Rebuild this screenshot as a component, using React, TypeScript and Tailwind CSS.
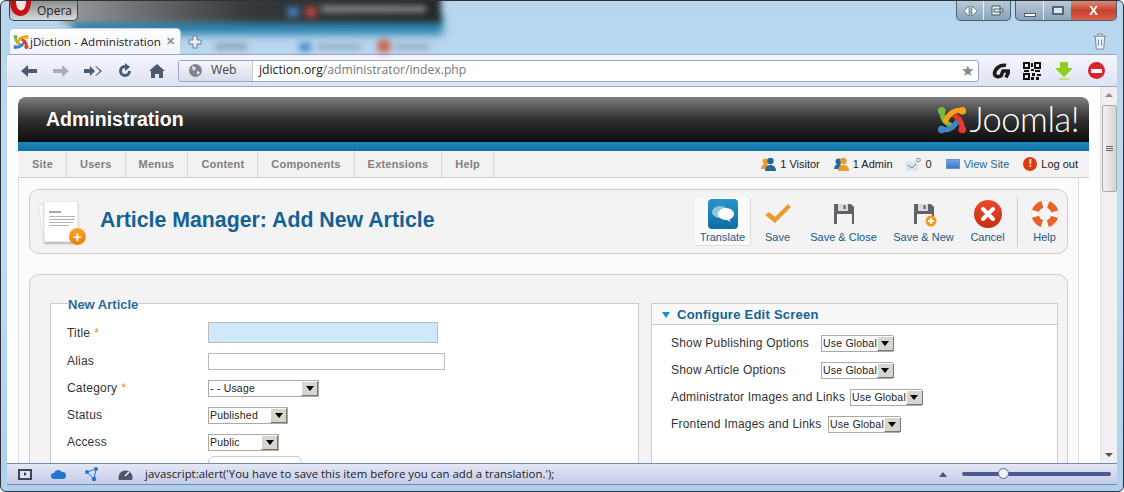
import React from 'react';

const page = "font-['Liberation_Sans',Arial,sans-serif]";
const chrome = "font-['Open_Sans','Noto_Sans',sans-serif]";

function JoomlaMark({ size }: { size: number }) {
  return (
    <svg width={size} height={size} viewBox="0 0 32 32" className="shrink-0">
      <path d="M6 7 C4 14 10 20 17 23" fill="none" stroke="#7cb83d" strokeWidth="5.500" strokeLinecap="round" />
      <path d="M6 26 C13 28 20 22 23 15" fill="none" stroke="#3c86c9" strokeWidth="5.500" strokeLinecap="round" />
      <path d="M26 26 C28 18 22 12 15 9" fill="none" stroke="#e8392f" strokeWidth="5.500" strokeLinecap="round" />
      <path d="M26 6 C19 4 12 10 9 17" fill="none" stroke="#f9a31a" strokeWidth="5.500" strokeLinecap="round" />
      <circle cx="5" cy="6" r="4" fill="#7cb83d" />
      <circle cx="27" cy="6" r="4" fill="#f9a31a" />
      <circle cx="5" cy="26" r="4" fill="#3c86c9" />
      <circle cx="27" cy="26" r="4" fill="#e8392f" />
    </svg>
  );
}

function NavIcon({ d, color = '#4c5a70' }: { d: string; color?: string }) {
  return (
    <svg width="18" height="16" viewBox="0 0 18 16" className="shrink-0">
      <path d={d} fill={color} />
    </svg>
  );
}

function FakeSelect({ label, width }: { label: string; width: number }) {
  return (
    <div
      className="flex h-[17px] items-stretch border border-[#aaaaaa] bg-white shrink-0"
      style={{ width }}
    >
      <span className="flex-1 pl-[1px] text-[10.500px] leading-[15px] text-[#222] tracking-[0.2px] whitespace-nowrap">
        {label}
      </span>
      <span className="flex w-[17px] shrink-0 items-center justify-center border border-t-white border-l-white border-r-[#777] border-b-[#777] bg-[#d8d5cf]">
        <span className="h-0 w-0 border-x-[4px] border-t-[5px] border-x-transparent border-t-black" />
      </span>
    </div>
  );
}

function FormRow({ label, required, children, top }: { label: string; required?: boolean; children: React.ReactNode; top: string }) {
  return (
    <div className={`flex items-center ${top}`}>
      <span className="w-[141px] shrink-0 text-[12px] tracking-[0.2px] text-[#333]">
        {label}
        {required && <span className="ml-[4px] text-[#f08a1d]">*</span>}
      </span>
      {children}
    </div>
  );
}

function ToolButton({ label, width, children, active }: { label: string; width: number; children: React.ReactNode; active?: boolean }) {
  return (
    <div
      className={`flex h-[48px] flex-col items-center shrink-0 ${active ? 'border-r border-b border-[#dddddd] bg-[#fafafa]' : ''}`}
      style={{ width }}
    >
      <div className="flex h-[32px] items-center justify-center">{children}</div>
      <span className="mt-[1px] text-[11px] leading-[13px] text-[#215a8b] whitespace-nowrap">{label}</span>
    </div>
  );
}

function Disk({ plus }: { plus?: boolean }) {
  return (
    <svg width="26" height="26" viewBox="0 0 26 26">
      <path d="M3 3h17l3 3v17H3z" fill="#5f6266" />
      <rect x="7" y="3" width="10" height="7" fill="#d9dadb" />
      <rect x="12.500" y="4" width="2" height="4" fill="#5f6266" />
      <rect x="6" y="13" width="15" height="10" fill="#f3f3f3" />
      {plus && (
        <>
          <circle cx="20" cy="20" r="5.500" fill="#f39a1f" />
          <path d="M20 17v6M17 20h6" stroke="#fff" strokeWidth="1.800" />
        </>
      )}
    </svg>
  );
}

function Person({ a, b }: { a: string; b: string }) {
  return (
    <svg width="15" height="15" viewBox="0 0 15 15" className="shrink-0">
      <circle cx="4.500" cy="4.500" r="3" fill={a} />
      <path d="M0 12c0-3 2-5 4.500-5S8 9 8 12z" fill={a} />
      <circle cx="9.500" cy="4" r="3.200" fill={b} />
      <path d="M4 14c0-4 2.500-6 5.500-6s5.500 2 5.500 6z" fill={b} />
    </svg>
  );
}

export default function App() {
  const menu = ['Site', 'Users', 'Menus', 'Content', 'Components', 'Extensions', 'Help'];
  const screenOptions = [
    { label: 'Show Publishing Options', cls: 'w-[150px]' },
    { label: 'Show Article Options', cls: 'w-[150px]' },
    { label: 'Administrator Images and Links', cls: 'w-[179px]' },
    { label: 'Frontend Images and Links', cls: 'w-[157px]' },
  ];

  return (
    <div className="relative flex h-[492px] w-[1124px] flex-col overflow-hidden rounded-[6px] bg-gradient-to-b from-[#b8d5ee] via-[#bfdcf5] to-[#afd0ee] border border-[#2c3338]">
      {/* blurred window behind the glass */}
      <div className="absolute left-[70px] top-[14px] h-[20px] w-[372px] bg-[#2d83ad] blur-[4px]" />
      <div className="absolute left-[60px] top-[-8px] h-[30px] w-[380px] bg-gradient-to-r from-[#9a9c9e] via-[#34383b] to-[#24282b] blur-[3px]" />
      <div className="absolute left-[286px] top-[6px] h-[10px] w-[12px] bg-[#3f7fb5] blur-[3px]" />
      <div className="absolute left-[304px] top-[6px] h-[10px] w-[12px] bg-[#b7473f] blur-[3px]" />
      <div className="absolute left-[320px] top-[5px] h-[6px] w-[105px] bg-[#8b9095] blur-[3px]" />
      <div className="absolute left-[214px] top-[43px] h-[5px] w-[32px] bg-[#7d97ac] blur-[3px]" />
      <div className="absolute left-[298px] top-[42px] h-[8px] w-[12px] bg-[#3f86cf] blur-[3px]" />
      <div className="absolute left-[316px] top-[43px] h-[5px] w-[44px] bg-[#8ba6bb] blur-[3px]" />
      <div className="absolute left-[376px] top-[38px] h-[14px] w-[14px] rounded-full bg-[#c9614f] blur-[3px]" />
      <div className="absolute left-[394px] top-[43px] h-[5px] w-[34px] bg-[#8ba6bb] blur-[3px]" />

      {/* title row */}
      <div className="relative flex h-[26px] shrink-0 items-start justify-between pl-[8px] pr-[6px]">
        <div className={`relative flex h-[20px] w-[69px] items-center overflow-hidden rounded-b-[5px] border border-t-0 border-[#3d4246] bg-gradient-to-b from-[#8c8f92] to-[#d9dadb] pl-[27px] text-[12px] text-[#222] ${chrome}`}>
          <svg width="22" height="16" viewBox="0 0 22 16" className="absolute left-0 top-0">
            <path d="M0 0h21c0 10-5 15-10.500 15S0 10 0 0z" fill="#c80f14" />
            <path d="M6 0h10c0 6-2 9.500-5 9.500S6 6 6 0z" fill="#f1e4e0" />
          </svg>
          Opera
        </div>
        <div className="flex gap-[4px]">
          <div className="flex h-[20px] w-[55px] items-center overflow-hidden rounded-b-[5px] border border-t-0 border-[#4a6070] bg-gradient-to-b from-[#b9c9d6] to-[#8aa3b8]">
            <span className="flex h-full flex-1 items-center justify-center border-r border-[#e6edf3]">
              <svg width="13" height="10" viewBox="0 0 13 10"><path d="M5 0v10L0 5zM8 0v10l5-5z" fill="#fff" stroke="#3c5160" strokeWidth="0.600" /></svg>
            </span>
            <span className="flex h-full flex-1 items-center justify-center">
              <svg width="13" height="11" viewBox="0 0 13 11"><path d="M1 1h8v9H1zM3 4h9v3H3z" fill="#e8eef2" stroke="#4a5c69" /></svg>
            </span>
          </div>
          <div className="flex h-[20px] w-[102px] items-center overflow-hidden rounded-b-[5px] border border-t-0 border-[#4a6070] bg-gradient-to-b from-[#b9c9d6] to-[#8aa3b8]">
            <span className="flex h-full w-[28px] items-end justify-center border-r border-[#e6edf3] pb-[3px]">
              <span className="h-[4px] w-[12px] border border-[#4a5c69] bg-white" />
            </span>
            <span className="flex h-full w-[27px] items-center justify-center">
              <span className="h-[9px] w-[12px] border-2 border-[#54666f] bg-[#dfe8ee]" />
            </span>
            <span className={`flex h-full flex-1 items-center justify-center bg-gradient-to-b from-[#d9897a] via-[#c8402c] to-[#d9624f] text-[13px] font-bold text-white ${page}`}>
              X
            </span>
          </div>
        </div>
      </div>

      {/* tab row */}
      <div className="relative flex h-[27px] shrink-0 items-end pl-[8px] pr-[15px]">
        <div className={`flex h-[26px] w-[172px] items-center rounded-t-[5px] border border-b-0 border-[#c7cde0] bg-gradient-to-b from-white to-[#f1f2fa] pl-[3px] text-[11.600px] text-[#222] ${chrome}`}>
          <JoomlaMark size={16} />
          <span className="ml-[1px] whitespace-nowrap">jDiction - Administration</span>
          <span className="ml-[5px] text-[11px] font-bold text-[#8a8f9c]">✕</span>
        </div>
        <svg width="14" height="14" viewBox="0 0 14 14" className="mb-[5px] ml-[7px]">
          <path d="M5 1h4v4h4v4H9v4H5V9H1V5h4z" fill="#e9eef3" stroke="#6d7f8f" />
        </svg>
        <svg width="16" height="17" viewBox="0 0 14 16" className="mb-[4px] ml-auto">
          <path d="M1 3h12M5 3V1h4v2M2.500 3l1 12h7l1-12M5.500 6v6M8.500 6v6" fill="#e9f2fa" stroke="#7e8f9c" />
        </svg>
      </div>

      <div className="flex min-h-0 flex-1 flex-col px-[6px]">
        {/* browser toolbar */}
        <div className="flex h-[33px] shrink-0 items-center border-t border-b border-[#9ba4c4] bg-gradient-to-b from-[#f5f6fd] to-[#dfe2f2] pl-[13px] pr-[12px]">
          <NavIcon d="M8 2v4h9v4H8v4L1 8z" />
          <span className="ml-[14px]"><NavIcon d="M10 2v4H1v4h9v4l7-6z" color="#a7afbd" /></span>
          <span className="ml-[14px]"><NavIcon d="M6 3v3H0v4h6v3l5-5zM11 3l5 5-5 5 1 0 6-5-6-5z" /></span>
          <span className="ml-[14px]"><NavIcon d="M9 2a6 6 0 1 0 6 6h-3a3 3 0 1 1-3-3v3l5-4-5-4z" /></span>
          <span className="ml-[14px]"><NavIcon d="M9 1l8 7h-2v7h-4v-4H7v4H3V8H1z" /></span>
          <div className={`ml-[12px] flex h-[22px] w-[801px] shrink-0 items-stretch overflow-hidden rounded-[3px] border border-[#9aa3c0] bg-white text-[12.200px] ${chrome}`}>
            <div className="flex w-[74px] items-center gap-[9px] border-r border-[#c4c9dc] bg-gradient-to-b from-[#f4f5fb] to-[#d9dcec] pl-[10px] text-[#444]">
              <svg width="13" height="13" viewBox="0 0 13 13">
                <circle cx="6.500" cy="6.500" r="6.500" fill="#7d8490" />
                <path d="M3 2l3 1 1 2-3 2zM8 7l3 1-2 3-1-1z" fill="#e3e5ea" />
              </svg>
              Web
            </div>
            <div className="flex flex-1 items-center pl-[6px] text-[#222]">
              jdiction.org<span className="text-[#777]">/administrator/index.php</span>
            </div>
            <span className="flex w-[22px] items-center justify-center text-[15px] text-[#7d8696]">★</span>
          </div>
          <svg width="18" height="16" viewBox="0 0 18 16" className="ml-[13px] shrink-0">
            <path d="M14 2.500C8 1 3 6 2.500 10.500 2.500 14 7 14 9 13l2-5h6l-3 6.500" fill="none" stroke="#1d1d1d" strokeWidth="3.600" />
          </svg>
          <svg width="18" height="18" viewBox="0 0 18 18" className="ml-[13px] shrink-0" shapeRendering="crispEdges">
            <path d="M0 0h7v7H0zM2 2v3h3V2zM11 0h7v7h-7zM13 2v3h3V2zM0 11h7v7H0zM2 13v3h3v-3zM8 1h2v4H8zM8 7h3v2H8zM12 8h5v2h-5zM1 8h5v2H1zM9 11h3v3H9zM14 12h4v2h-4zM8 15h3v3H8zM13 15h3v3h-3z" fill="#111" fillRule="evenodd" />
          </svg>
          <svg width="18" height="18" viewBox="0 0 18 18" className="ml-[14px] shrink-0">
            <path d="M5 0h8v6h5l-9 9-9-9h5z" fill="#8fce1e" />
            <path d="M4 16h10v2H4z" fill="#c3e46f" />
          </svg>
          <span className="ml-[15px] flex h-[17px] w-[17px] shrink-0 items-center justify-center rounded-full bg-[#d8262c]">
            <span className="h-[4px] w-[11px] bg-white" />
          </span>
        </div>

        {/* page viewport */}
        <div className="flex min-h-0 flex-1 bg-white">
          <div className={`min-w-0 flex-1 overflow-hidden pl-[11px] pr-[11px] pt-[10px] ${page}`}>
            <div className="flex h-[45px] items-center justify-between rounded-t-[8px] bg-gradient-to-b from-[#808080] via-[#303030] to-[#0e0e0e] pl-[28px] pr-[10px]">
              <span className="text-[19.500px] font-bold text-white">Administration</span>
              <div className="flex items-center gap-[3px]">
                <JoomlaMark size={30} />
                <span className="font-['Lato',sans-serif] text-[34.500px] font-light leading-none tracking-[-0.5px] text-white">Joomla!</span>
              </div>
            </div>
            <div className="h-[9px] bg-gradient-to-b from-[#1b86c0] to-[#11719f]" />

            <div className="flex h-[27px] items-stretch justify-between border-b border-[#cccccc] bg-[#f2f2f2] pr-[11px]">
              <div className="flex">
                {menu.map((m, i) => (
                  <span
                    key={m}
                    className={`flex items-center border-r border-[#d9d9d9] pt-[1px] text-[11px] font-bold tracking-[0.2px] text-[#808080] ${i === 0 ? 'pl-[14px] pr-[13px]' : 'px-[13px]'}`}
                  >
                    {m}
                  </span>
                ))}
              </div>
              <div className="flex items-center text-[11px] text-[#222]">
                <Person a="#f09a26" b="#1e6a9e" />
                <span className="ml-[4px]">1 Visitor</span>
                <span className="ml-[14px]"><Person a="#1e6a9e" b="#f09a26" /></span>
                <span className="ml-[4px]">1 Admin</span>
                <svg width="15" height="13" viewBox="0 0 15 13" className="ml-[13px]">
                  <rect x="0" y="3" width="12" height="10" fill="#dde4ea" />
                  <path d="M2 7l4 3 4-4" fill="none" stroke="#6d8396" />
                  <circle cx="12.500" cy="2" r="1.800" fill="#fff" stroke="#6d8396" />
                </svg>
                <span className="ml-[5px]">0</span>
                <span className="ml-[14px] h-[10px] w-[14px] border border-[#6b93bd] bg-gradient-to-b from-[#6aa7e6] to-[#3b78c4]" />
                <span className="ml-[4px] text-[#28699c]">View Site</span>
                <span className="ml-[14px] flex h-[14px] w-[14px] items-center justify-center rounded-full bg-[#dd3a12] text-[10px] font-bold leading-none text-white">!</span>
                <span className="ml-[4px]">Log out</span>
              </div>
            </div>

            {/* page body */}
            <div className="mr-[10px] h-[400px] border-x border-[#dddddd] bg-[#fbfbfb] px-[10px] pt-[11px]">
              <div className="flex h-[65px] items-center rounded-[10px] border border-[#cccccc] bg-[#f3f3f3] pr-[1px]">
                <div className="relative ml-[12px] h-[44px] w-[38px] shrink-0">
                  <div className="absolute left-[-2px] top-[2px] h-[38px] w-[20px] -rotate-[8deg] border border-[#e2e2e2] bg-[#f8f8f8]" />
                  <div className="absolute left-[2px] top-[1px] h-[41px] w-[34px] border border-[#ececec] bg-white pl-[4px] pt-[9px] shadow-[0_2px_2px_#bbb]">
                    <div className="h-[2px] w-[12px] bg-[#aaa]" />
                    <div className="mt-[3px] h-[1px] w-[26px] bg-[#b5b5b5]" />
                    <div className="mt-[2px] h-[1px] w-[26px] bg-[#b5b5b5]" />
                    <div className="mt-[2px] h-[1px] w-[24px] bg-[#b5b5b5]" />
                    <div className="mt-[2px] h-[1px] w-[20px] bg-[#b5b5b5]" />
                  </div>
                  <span className="absolute bottom-[-1px] right-[-6px] flex h-[17px] w-[17px] items-center justify-center rounded-full bg-gradient-to-b from-[#fba626] to-[#ee7c06] text-[15px] font-bold leading-none text-white">+</span>
                </div>
                <span className="ml-[20px] mb-[2px] text-[21.300px] font-bold text-[#146295] whitespace-nowrap">Article Manager: Add New Article</span>
                <div className="ml-auto flex items-center">
                  <ToolButton label="Translate" width={56} active>
                    <div className="flex h-[30px] w-[30px] items-center justify-center rounded-[4px] bg-gradient-to-b from-[#2b93c9] to-[#0d6ea6]">
                      <svg width="24" height="18" viewBox="0 0 24 18">
                        <ellipse cx="9" cy="7" rx="8" ry="6" fill="#8fc6e2" />
                        <ellipse cx="15" cy="9" rx="8" ry="6" fill="#fff" />
                        <path d="M17 13l3 4-6-3z" fill="#fff" />
                      </svg>
                    </div>
                  </ToolButton>
                  <ToolButton label="Save" width={53}>
                    <svg width="28" height="24" viewBox="0 0 28 24">
                      <path d="M1 13l4-3 6 5L24 2l3 3-16 16z" fill="#f1982a" />
                    </svg>
                  </ToolButton>
                  <ToolButton label="Save & Close" width={79}>
                    <Disk />
                  </ToolButton>
                  <ToolButton label="Save & New" width={81}>
                    <Disk plus />
                  </ToolButton>
                  <ToolButton label="Cancel" width={47}>
                    <span className="flex h-[28px] w-[28px] items-center justify-center rounded-full bg-gradient-to-b from-[#ee4a2a] to-[#c42d10]">
                      <svg width="14" height="14" viewBox="0 0 14 14"><path d="M2 2l10 10M12 2L2 12" stroke="#fff" strokeWidth="4" strokeLinecap="round" /></svg>
                    </span>
                  </ToolButton>
                  <div className="ml-[6px] mr-[5px] h-[50px] w-px bg-[#cccccc]" />
                  <ToolButton label="Help" width={43}>
                    <svg width="28" height="28" viewBox="0 0 28 28">
                      <circle cx="14" cy="14" r="10" fill="none" stroke="#e8622a" strokeWidth="7" />
                      <circle cx="14" cy="14" r="10" fill="none" stroke="#f7f7f7" strokeWidth="7.500" strokeDasharray="6 9.708" strokeDashoffset="3" />
                    </svg>
                  </ToolButton>
                </div>
              </div>

              <div className="mt-[20px] flex h-[260px] items-start gap-[12px] rounded-t-[10px] border border-[#cccccc] bg-[#f3f3f3] px-[20px] pt-[20px]">
                <fieldset className="h-[200px] w-[589px] shrink-0 border border-[#cccccc] bg-white pl-[16px]">
                  <legend className="ml-[1px] pt-[2px] text-[13px] font-bold leading-[15px] text-[#2a6a98]">New Article</legend>
                  <FormRow label="Title" required top="mt-[10px]">
                    <div className="h-[21px] w-[230px] border border-[#bbbbbb] bg-[#cfe8fb]" />
                  </FormRow>
                  <FormRow label="Alias" top="mt-[9px]">
                    <div className="h-[17px] w-[237px] border border-[#bbbbbb] bg-white" />
                  </FormRow>
                  <FormRow label="Category" required top="mt-[9px]">
                    <FakeSelect label="- - Usage" width={111} />
                  </FormRow>
                  <FormRow label="Status" top="mt-[9px]">
                    <FakeSelect label="Published" width={80} />
                  </FormRow>
                  <FormRow label="Access" top="mt-[9px]">
                    <FakeSelect label="Public" width={71} />
                  </FormRow>
                  <div className="ml-[141px] mt-[5px] h-[20px] w-[94px] rounded-t-[6px] border border-[#cccccc] bg-white" />
                </fieldset>

                <div className="mt-[8px] h-[200px] w-[407px] shrink-0 border border-[#cccccc] bg-white">
                  <div className="flex h-[21px] items-center border-b border-[#cccccc] bg-[#f8f8f8] pl-[10px] pt-[1px]">
                    <span className="h-0 w-0 border-x-[4px] border-t-[6px] border-x-transparent border-t-[#1b8fc7]" />
                    <span className="ml-[7px] text-[13px] font-bold tracking-[0.25px] text-[#146295]">Configure Edit Screen</span>
                  </div>
                  <div className="flex flex-col gap-[9px] pl-[19px] pt-[9px]">
                    {screenOptions.map((o) => (
                      <div key={o.label} className="flex items-center">
                        <span className={`${o.cls} shrink-0 text-[12px] tracking-[0.2px] text-[#333] whitespace-nowrap`}>{o.label}</span>
                        <FakeSelect label="Use Global" width={72} />
                      </div>
                    ))}
                  </div>
                </div>
              </div>
            </div>
          </div>

          {/* scrollbar */}
          <div className="flex w-[17px] shrink-0 flex-col items-center border-l border-[#e3e3e3] bg-[#f0f0f0]">
            <span className="mt-[6px] h-0 w-0 border-x-[4px] border-b-[4px] border-x-transparent border-b-[#8d8d8d]" />
            <div className="mt-[8px] flex h-[87px] w-[15px] items-center justify-center rounded-[2px] border border-[#a8a8a8] bg-gradient-to-r from-[#f2f2f2] to-[#d4d4d4]">
              <div className="flex flex-col gap-[1px]">
                <span className="h-px w-[7px] bg-[#666]" />
                <span className="h-px w-[7px] bg-[#666]" />
                <span className="h-px w-[7px] bg-[#666]" />
              </div>
            </div>
            <span className="mt-auto mb-[6px] h-0 w-0 border-x-[4px] border-t-[4px] border-x-transparent border-t-[#555]" />
          </div>
        </div>

        {/* status bar */}
        <div className={`flex h-[22px] shrink-0 items-center border-t border-b border-[#7688ad] bg-gradient-to-b from-[#e3e7f6] to-[#c5cce8] pl-[11px] pr-[6px] text-[11.400px] text-[#222] ${chrome}`}>
          <span className="flex h-[11px] w-[14px] items-center justify-center border-2 border-[#3c4657] bg-[#dfe3f1]">
            <span className="h-0 w-0 border-y-[2px] border-l-[3px] border-y-transparent border-l-[#3c4657]" />
          </span>
          <svg width="15" height="10" viewBox="0 0 15 10" className="ml-[19px]">
            <path d="M3 10a3 3 0 0 1 0-6 4.500 4.500 0 0 1 8-1 3.500 3.500 0 0 1 1 7z" fill="#2277d0" />
          </svg>
          <svg width="14" height="14" viewBox="0 0 14 14" className="ml-[19px]">
            <circle cx="2" cy="5" r="2" fill="#2277d0" />
            <circle cx="11" cy="2" r="2" fill="#2277d0" />
            <circle cx="9" cy="12" r="2.300" fill="#2277d0" />
            <path d="M2 5l9-3M2 5l7 7M11 2L9 12" stroke="#2277d0" />
          </svg>
          <svg width="15" height="12" viewBox="0 0 15 12" className="ml-[19px]">
            <path d="M1 12a7 7 0 1 1 13 0z" fill="#4c5668" />
            <path d="M7 8l4-4" stroke="#fff" strokeWidth="1.500" />
          </svg>
          <span className="ml-[12px] whitespace-nowrap">javascript:alert('You have to save this item before you can add a translation.');</span>
          <span className="ml-auto h-0 w-0 border-x-[4px] border-b-[5px] border-x-transparent border-b-[#4c5668]" />
          <div className="relative ml-[15px] h-[4px] w-[149px] rounded-full bg-[#4a5a8c]">
            <span className="absolute left-[36px] top-[-4px] h-[11px] w-[11px] rounded-full border border-[#5a6a8f] bg-[#eef1f8]" />
          </div>
        </div>
      </div>
      <div className="h-[6px] shrink-0" />
    </div>
  );
}
